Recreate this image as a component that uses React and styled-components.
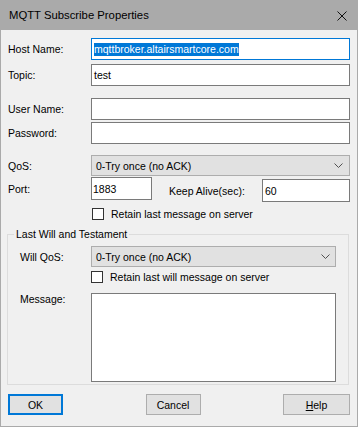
import styled, { createGlobalStyle } from "styled-components";

const GlobalStyle = createGlobalStyle`
  html, body {
    margin: 0;
    padding: 0;
    background: #f0f0f0;
  }
  body {
    font-family: "Liberation Sans", Arial, sans-serif;
    font-size: 10.5px;
    color: #000;
  }
`;

const Window = styled.div`
  width: 358px;
  height: 427px;
  box-sizing: border-box;
  border: 1px solid #aaaaaa;
  border-top: none;
  background: #f0f0f0;
  display: flex;
  flex-direction: column;
`;

const TitleBar = styled.div`
  height: 30px;
  flex-shrink: 0;
  background: #aaaaaa;
  display: flex;
  align-items: center;
  justify-content: space-between;
  padding: 0 10px 0 8px;
  font-size: 11.3px;
`;

const CloseIcon = styled.svg`
  width: 10px;
  height: 10px;
  margin-top: 1px;
`;

const Body = styled.div`
  display: flex;
  flex-direction: column;
  padding: 8px 7px 0 7px;
`;

const Row = styled.div`
  display: grid;
  grid-template-columns: ${(p) => p.$label || 83}px 1fr;
  align-items: ${(p) => (p.$top ? "start" : "center")};
  height: ${(p) => p.$h}px;
  margin-top: ${(p) => p.$mt || 0}px;
`;

const PortRow = styled.div`
  display: grid;
  grid-template-columns: 83px 61px 1fr 88px;
  align-items: start;
  height: 25px;
  margin-top: ${(p) => p.$mt}px;
`;

const Label = styled.span`
  line-height: 12px;
  padding-top: ${(p) => p.$pt || 0}px;
`;

const Field = styled.div`
  box-sizing: border-box;
  height: ${(p) => p.$h || 22}px;
  margin-top: ${(p) => p.$mt || 0}px;
  background: #fff;
  border: 1px solid ${(p) => (p.$focus ? "#0078d7" : "#7a7a7a")};
  display: flex;
  align-items: ${(p) => (p.$multi ? "flex-start" : "center")};
  padding: 0 ${(p) => p.$pad ?? 2}px;
  white-space: nowrap;
  overflow: hidden;
`;

const Selected = styled.span`
  background: #0078d7;
  color: #fff;
  line-height: 13px;
`;

const Combo = styled.div`
  box-sizing: border-box;
  height: 21px;
  background: #e1e1e1;
  border: 1px solid #adadad;
  display: flex;
  align-items: center;
  justify-content: space-between;
  padding: 0 ${(p) => p.$chev || 6}px 0 4px;
`;

const Chevron = styled.svg`
  width: 9px;
  height: 5px;
`;

const CheckRow = styled.div`
  display: flex;
  align-items: center;
  gap: 7px;
  height: 12px;
  margin-top: ${(p) => p.$mt}px;
  margin-left: ${(p) => p.$ml}px;
`;

const Box = styled.span`
  box-sizing: border-box;
  width: 12px;
  height: 12px;
  border: 1px solid #333;
  background: #fff;
`;

const Group = styled.div`
  display: flex;
  flex-direction: column;
  border: 1px solid #dcdcdc;
  margin: 14px 1px 0 -1px;
  padding: 0 12px 2px 12px;
`;

const Caption = styled.div`
  width: fit-content;
  margin: -7px 0 0 -6px;
  padding: 0 2px;
  line-height: 13px;
  background: #f0f0f0;
`;

const ButtonBar = styled.div`
  display: flex;
  justify-content: space-between;
  margin-top: 9px;
`;

const Button = styled.div`
  box-sizing: border-box;
  width: ${(p) => p.$w}px;
  height: 21px;
  background: #e1e1e1;
  border: ${(p) => (p.$default ? "2px solid #0078d7" : "1px solid #adadad")};
  display: flex;
  align-items: center;
  justify-content: center;
`;

const Checkbox = ({ label, mt, ml }) => (
  <CheckRow $mt={mt} $ml={ml}>
    <Box />
    <span>{label}</span>
  </CheckRow>
);

const Select = ({ value, chev }) => (
  <Combo $chev={chev}>
    <span>{value}</span>
    <Chevron viewBox="0 0 9 5">
      <polyline points="0.5,0.5 4.5,4.5 8.5,0.5" fill="none" stroke="#505050" strokeWidth="1" />
    </Chevron>
  </Combo>
);

export default function App() {
  return (
    <>
      <GlobalStyle />
      <Window>
        <TitleBar>
          <span>MQTT Subscribe Properties</span>
          <CloseIcon viewBox="0 0 10 10">
            <path d="M0.5 0.5 L9.5 9.5 M9.5 0.5 L0.5 9.5" stroke="#111" strokeWidth="1" />
          </CloseIcon>
        </TitleBar>
        <Body>
          <Row $h={22}>
            <Label>Host Name:</Label>
            <Field $focus>
              <Selected>mqttbroker.altairsmartcore.com</Selected>
            </Field>
          </Row>
          <Row $h={22} $mt={4}>
            <Label>Topic:</Label>
            <Field>test</Field>
          </Row>
          <Row $h={22} $mt={12}>
            <Label>User Name:</Label>
            <Field />
          </Row>
          <Row $h={22} $mt={2}>
            <Label>Password:</Label>
            <Field />
          </Row>
          <Row $h={21} $mt={11}>
            <Label>QoS:</Label>
            <Select value="0-Try once (no ACK)" chev={6} />
          </Row>
          <PortRow $mt={1}>
            <Label $pt={6}>Port:</Label>
            <Field $h={23} $pad={1}>1883</Field>
            <Label $pt={8} style={{ paddingLeft: 17 }}>Keep Alive(sec):</Label>
            <Field $h={23} $mt={2}>60</Field>
          </PortRow>
          <Checkbox label="Retain last message on server" mt={6} ml={84} />
          <Group>
            <Caption>Last Will and Testament</Caption>
            <Row $h={21} $mt={5} $label={71}>
              <Label>Will QoS:</Label>
              <Select value="0-Try once (no ACK)" chev={5} />
            </Row>
            <Checkbox label="Retain last will message on server" mt={4} ml={71} />
            <Row $h={89} $mt={10} $label={71} $top>
              <Label $pt={0}>Message:</Label>
              <Field $h={89} $multi />
            </Row>
          </Group>
          <ButtonBar>
            <Button $w={55} $default>OK</Button>
            <Button $w={55}>Cancel</Button>
            <Button $w={67}>
              <span>
                <u>H</u>elp
              </span>
            </Button>
          </ButtonBar>
        </Body>
      </Window>
    </>
  );
}
